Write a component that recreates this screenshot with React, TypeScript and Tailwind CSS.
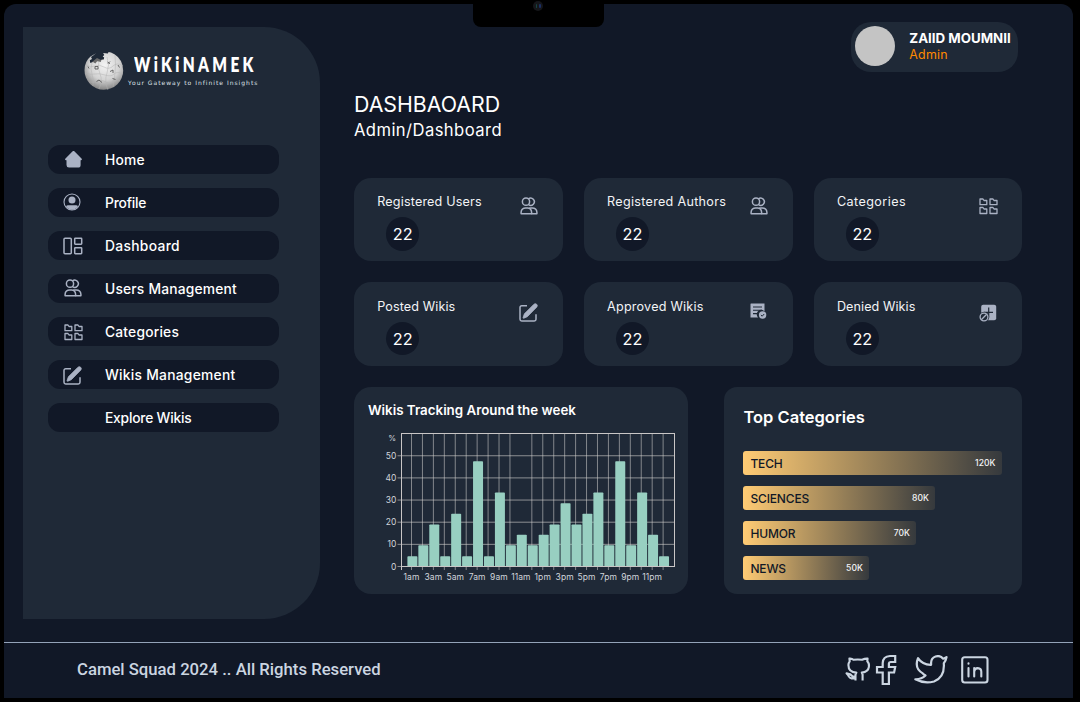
import type { ReactNode } from "react";

type IconProps = { className?: string };

const muted = "#aab2c4";

function HomeIcon({ className }: IconProps) {
  return (
    <svg width="17" height="17" viewBox="0 0 17 17" className={className} fill={muted}>
      <path d="M7.4 .5a1.5 1.5 0 0 1 2.2 0l6.9 6.9c.8.9.4 1.8-.6 1.9h-.3V14a2.6 2.6 0 0 1-2.6 2.6H4A2.6 2.6 0 0 1 1.5 14V9.300h-.4C0 9.200-.300 8.300.500 7.400z" />
    </svg>
  );
}

function ProfileIcon({ className }: IconProps) {
  return (
    <svg width="18" height="18" viewBox="0 0 18 18" className={className}>
      <circle cx="9" cy="9" r="8" fill="none" stroke={muted} strokeWidth="1.100" />
      <circle cx="9" cy="7" r="3.500" fill={muted} />
      <path d="M3 13.300Q3.600 12.200 5 12.200H13Q14.400 12.200 15 13.300Q12.800 16.700 9 16.700T3 13.300z" fill={muted} />
    </svg>
  );
}

function LayoutIcon({ className }: IconProps) {
  return (
    <svg width="20" height="18" viewBox="0 0 20 18" className={className} fill="none" stroke={muted} strokeWidth="1.500">
      <rect x="1" y="1.200" width="7.300" height="15.500" rx="1" />
      <rect x="11.700" y="1.200" width="7" height="6" rx=".6" />
      <rect x="11.700" y="10.700" width="7" height="6" rx=".6" />
    </svg>
  );
}

function UsersIcon({ className }: IconProps) {
  return (
    <svg width="18" height="18" viewBox="0 0 18 18" className={className} fill="none" stroke={muted} strokeWidth="1.500">
      <circle cx="6" cy="4.700" r="3.600" />
      <path d="M8.400 1.900A3.600 3.600 0 1 1 8.400 7.500" />
      <path d="M1.100 16.700v-1.500a4.500 4.500 0 0 1 4.500-4.300h2a4.500 4.500 0 0 1 4 4.300V16.700z" strokeLinejoin="round" />
      <path d="M9 11.300a4.500 4.500 0 0 1 2-.4h1.400a4.500 4.500 0 0 1 4.500 4.300V16.700h-5.500" strokeLinejoin="round" />
    </svg>
  );
}

function FoldersIcon({ className }: IconProps) {
  return (
    <svg width="19" height="17" viewBox="0 0 19 17" className={className} fill="none" stroke={muted} strokeWidth="1.300" strokeLinejoin="round">
      <path d="M1 1h3l1 1.500h2.800v4.200H1z" />
      <path d="M11 1h3l1 1.500h3v4.200h-7z" />
      <path d="M1 9.500h3l1 1.500h2.800v4.500H1z" />
      <path d="M11 9.500h3l1 1.500h3v4.500h-7z" />
    </svg>
  );
}

function EditIcon({ className }: IconProps) {
  return (
    <svg width="19" height="19" viewBox="0 0 19 19" className={className} fill="none" stroke={muted}>
      <path d="M8 2.800H2.700A1.700 1.700 0 0 0 1 4.500v11.800A1.700 1.700 0 0 0 2.700 18h12.600a1.700 1.700 0 0 0 1.700-1.700v-5" strokeWidth="1.500" />
      <path d="M15 1.200q1.300-1.100 2.600 0t.3 2.700L8.300 13.700l-3.500 1.500q-.9.200-.7-.7l1.300-3.700z" fill={muted} strokeWidth=".8" />
    </svg>
  );
}

function ApprovedIcon({ className }: IconProps) {
  return (
    <svg width="17" height="17" viewBox="0 0 17 17" className={className}>
      <path d="M1 .5h13.500V8.200A4.500 4.500 0 0 0 8 14.500H.500V1Q.500.500 1 .500z" fill={muted} />
      <path d="M3 4h9M3 7.300h9M3 10.600h4" stroke="#1f2937" strokeWidth="1.100" />
      <circle cx="12.600" cy="12" r="3.700" fill={muted} />
      <path d="M10.900 12l1.300 1.200 2-2.200" stroke="#1f2937" fill="none" />
    </svg>
  );
}

function DeniedIcon({ className }: IconProps) {
  return (
    <svg width="18" height="18" viewBox="0 0 18 18" className={className}>
      <rect x="2.200" y=".7" width="15" height="15.500" rx="2" fill={muted} />
      <path d="M9.700 3.500v10M5 8.400h9" stroke="#1f2937" strokeWidth="1.200" />
      <circle cx="5" cy="13" r="5.200" fill="#1f2937" />
      <circle cx="5" cy="13" r="3.900" fill="none" stroke={muted} strokeWidth="1.300" />
      <path d="M2.300 15.700l5.400-5.400" stroke={muted} strokeWidth="1.300" />
    </svg>
  );
}

function Globe() {
  return (
    <svg width="40" height="40" viewBox="0 0 40 40" className="shrink-0">
      <defs>
        <radialGradient id="globe" cx=".52" cy=".35" r=".65">
          <stop offset="0" stopColor="#f4f4f4" />
          <stop offset=".6" stopColor="#d2d2d2" />
          <stop offset="1" stopColor="#858585" />
        </radialGradient>
      </defs>
      <path d="M8 11L13 7l4 2 5-2 2 3-5 3-6 2z" fill="#6b6b6b" />
      <path
        d="M12 2.200L6.500 5.500Q.5 10.500.5 19.200A19.300 19.300 0 0 0 39.200 19.500Q39 8.500 30.500 3.200L27 1.600l-2.400-.6-.8 1.600-4.700-.6 1.200 2-1.600 1.400 1.500 1.200-.5 2.200-2.200 0-.8 2.300-3.600-.8-1.700 2.200-2.400-1.600-2.700 1-.5-2.700 2.200-1.200-1-2 2.200-1.500z"
        fill="url(#globe)"
      />
      <g fill="none" stroke="#b3b3b3" strokeWidth=".5">
        <path d="M2 14q5 3 9 1t9 1 9-1 10 0M1 22q6 2 10 1t10 1 9-1 9 0M5 31q5 1 8-1t9 1 7-1 7 0" />
        <path d="M8 12q-2 6 0 11t1 12M15 10q-2 7 1 13t-1 15M23 6q3 8 0 16t1 17M31 4q1 9 0 18t-2 14" />
      </g>
      <g fill="none" stroke="#5b5b5b" strokeWidth=".9">
        <path d="M11 15.500h3v2.500h-3zM23.500 11l2.500 1.700M26 10.500l-2 2M12.500 30.500l2.500-1.500 3 2.500M26 20.500l3-1.500v3M4 15.500l1 2M34 14l1.500 2.500M28.500 27.500l3 1" />
      </g>
    </svg>
  );
}

const nav: { label: string; icon: ReactNode; tracking: string }[] = [
  { label: "Home", icon: <HomeIcon />, tracking: "tracking-[0.250px]" },
  { label: "Profile", icon: <ProfileIcon className="relative -left-[1.500px]" />, tracking: "tracking-[-0.200px]" },
  { label: "Dashboard", icon: <LayoutIcon className="relative -left-[0.500px] top-px" />, tracking: "tracking-[0.330px]" },
  { label: "Users Management", icon: <UsersIcon />, tracking: "tracking-[0.200px]" },
  { label: "Categories", icon: <FoldersIcon className="relative top-[1.500px]" />, tracking: "tracking-[0.200px]" },
  { label: "Wikis Management", icon: <EditIcon className="relative -left-px top-px" />, tracking: "tracking-[0.270px]" },
  { label: "Explore Wikis", icon: null, tracking: "tracking-[-0.200px]" },
];

function Sidebar() {
  return (
    <aside className="mt-[22.700px] ml-[18.600px] h-[592.500px] w-[297px] shrink-0 rounded-r-[56px] bg-[#1f2937]">
      <div className="mt-[24px] ml-[61px] flex h-10 gap-[4.500px]">
        <Globe />
        <div className="flex flex-col whitespace-nowrap">
          <span className="ml-[6px] mt-[1px] h-[24px] w-[121px] origin-left scale-x-75 font-['Lato',sans-serif] text-[20.500px] leading-[24px] font-extrabold tracking-[4.500px] text-white">
            WiKiNAMEK
          </span>
          <span className="mt-[3px] font-['DejaVu_Sans',sans-serif] text-[6px] leading-[8px] tracking-[1px] text-[#dfe3e8]">
            Your Gateway to Infinite Insights
          </span>
        </div>
      </div>
      <nav className="mt-[54.300px] ml-[25px] flex w-[231.500px] flex-col gap-[14.300px]">
        {nav.map((n) => (
          <a key={n.label} className="flex h-[28.700px] items-center rounded-[12px] bg-[#111827]">
            <span className="flex w-[51px] justify-center">{n.icon}</span>
            <span className={`mt-[1.300px] ml-[6.400px] text-[13.800px] leading-[20px] font-medium text-white ${n.tracking}`}>{n.label}</span>
          </a>
        ))}
      </nav>
    </aside>
  );
}

const stats: { label: string; icon: ReactNode; tracking: string; iconBox: string }[] = [
  { label: "Registered Users", icon: <UsersIcon />, tracking: "tracking-[0.160px]", iconBox: "pt-[19px]" },
  { label: "Registered Authors", icon: <UsersIcon />, tracking: "tracking-[0.290px]", iconBox: "pt-[19px]" },
  { label: "Categories", icon: <FoldersIcon />, tracking: "tracking-[0.420px]", iconBox: "pt-[20px]" },
  { label: "Posted Wikis", icon: <EditIcon />, tracking: "tracking-[0.100px]", iconBox: "pt-[20.500px]" },
  { label: "Approved Wikis", icon: <ApprovedIcon />, tracking: "tracking-[0.210px]", iconBox: "pt-[21px]" },
  { label: "Denied Wikis", icon: <DeniedIcon />, tracking: "tracking-[0.070px]", iconBox: "pt-[22px]" },
];

function StatCards() {
  return (
    <section className="mt-[37px] grid w-[668.500px] grid-cols-3 gap-x-[21px] gap-y-[21.200px]">
      {stats.map((s) => (
        <div key={s.label} className="flex h-[83.300px] justify-between rounded-[17px] bg-[#1f2937] pl-[23.300px]">
          <div className="flex flex-col">
            <span className={`mt-[15.300px] text-[12.600px] leading-[18px] whitespace-nowrap text-[#f3f4f6] ${s.tracking}`}>{s.label}</span>
            <span className="mt-[6px] ml-[8.700px] flex size-[33.500px] items-center justify-center rounded-full bg-[#111827] pt-px text-[16.300px] text-white">
              22
            </span>
          </div>
          <div className={`flex w-[68px] justify-center ${s.iconBox}`}>{s.icon}</div>
        </div>
      ))}
    </section>
  );
}

const bars = [
  10.300, 21.300, 42, 10.300, 52.700, 10.300, 105.300, 10.300, 74, 21.300, 31.700, 21.300,
  31.700, 42, 63.300, 42, 52.700, 74, 21.300, 105.300, 21.300, 74, 31.700, 10.300,
];
const pitch = 10.940;
const plot = { left: 17.500, right: 290.500, top: 3.500, bottom: 136.500 };

function WeekChart() {
  return (
    <div className="h-[207px] w-[334px] rounded-[17px] bg-[#1f2937] pl-[14px]">
      <h2 className="mt-[13px] text-[13.350px] leading-[20px] font-semibold text-white">Wikis Tracking Around the week</h2>
      <svg
        width="310"
        height="156"
        viewBox="-16 0 310 156"
        className="mt-[10px] overflow-visible font-['Inter',sans-serif] text-[8.500px]"
      >
        {bars.map((_, i) =>
          i === 10 ? null : (
            <line key={i} x1={27.500 + i * pitch} x2={27.500 + i * pitch} y1={plot.top} y2={plot.bottom + 3.500} stroke="#d6d3d1" strokeOpacity=".55" />
          )
        )}
        {[0, 1, 2, 3, 4, 5].map((v) => {
          const y = plot.bottom - v * 22.150;
          return (
            <g key={v}>
              <line x1={plot.left - 4} x2={plot.right} y1={y} y2={y} stroke="#d6d3d1" strokeOpacity=".6" />
              <text x="12.300" y={y + 3} textAnchor="end" fill="#d1d5db">{v * 10}</text>
            </g>
          );
        })}
        <text x="12" y="11" textAnchor="end" fill="#d1d5db" className="text-[8px]">%</text>
        {bars.map((h, i) => (
          <rect key={i} x={23.400 + i * pitch} y={plot.bottom - h} width="10" height={h} rx=".8" fill="#98cfc1" />
        ))}
        <rect
          x={plot.left}
          y={plot.top}
          width={plot.right - plot.left}
          height={plot.bottom - plot.top}
          fill="none"
          stroke="#c9c6c6"
        />
        <path d={`M${plot.left} ${plot.bottom}v3.500`} stroke="#c9c6c6" />
        {["1am", "3am", "5am", "7am", "9am", "11am", "1pm", "3pm", "5pm", "7pm", "9pm", "11pm"].map((t, i) => (
          <text key={t} x={27.500 + i * 2 * pitch} y="149.500" textAnchor="middle" fill="#d1d5db" letterSpacing=".1">
            {t}
          </text>
        ))}
      </svg>
    </div>
  );
}

const categories = [
  { name: "TECH", value: "120K", width: "w-[258.500px]" },
  { name: "SCIENCES", value: "80K", width: "w-[192px]" },
  { name: "HUMOR", value: "70K", width: "w-[173px]" },
  { name: "NEWS", value: "50K", width: "w-[126px]" },
];

function TopCategories() {
  return (
    <div className="mr-[0.600px] h-[207px] w-[298px] rounded-[13px] bg-[#1f2937] pl-[19.500px]">
      <h2 className="mt-[18px] text-[16.500px] leading-[24px] font-semibold text-white">Top Categories</h2>
      <div className="mt-[22px] flex flex-col gap-[11px]">
        {categories.map((c) => (
          <div
            key={c.name}
            className={`flex h-[24px] items-center justify-between rounded-[3px] bg-linear-to-r from-[#ffcb74] to-[#ffcb74]/10 pr-[6.500px] pl-[7px] ${c.width}`}
          >
            <span className="pt-px text-[12px] font-medium tracking-[-0.150px] text-[#111827]">{c.name}</span>
            <span className="pt-px text-[8.600px] font-medium text-[#f3f4f6]">{c.value}</span>
          </div>
        ))}
      </div>
    </div>
  );
}

function Footer() {
  return (
    <footer className="flex h-[56px] items-center border-t border-[#94a3b8] pb-[2px] pl-[73px] text-[#cbd5e1]">
      <span className="w-[768px] pt-px font-['Roboto',sans-serif] text-[16.700px] font-medium whitespace-nowrap">
        Camel Squad 2024 .. All Rights Reserved
      </span>
      <svg width="26" height="26" viewBox="0 0 26 26" fill="none" stroke="currentColor" strokeWidth="2.100" strokeLinejoin="round">
        <path d="M10.500 23.500v-6l.9-1.900q-8-.5-8-7.600 0-2 1.300-3.700l-.3-2.700q2.600-.2 4.100 1.200 4.200-.7 8.500 0Q20 1.400 22.600 1.600l-.3 2.700q2.200 2.300 1.600 5.500-.6 4.900-7.100 5.800l.8 1.900v6" />
        <path d="M10.500 19.500H7.700L5 17.200 1.600 16.300q1.500 1.100 2.400 3.300.7 1.500 2.500 1.700h4" strokeWidth="2.200" />
      </svg>
      <svg width="22" height="32" viewBox="0 0 22 32" className="ml-[4px]" fill="none" stroke="currentColor" strokeWidth="2.200" strokeLinejoin="miter">
        <path d="M20.200 2H15Q8 2.300 7.700 9v4H2v5.500h5.700v11.500h6.200V18.500h5.200l1.100-5.500h-6.300V9.500q0-1.300 1.700-1.500h4.600z" />
      </svg>
      <svg width="34" height="30" viewBox="0 0 34 30" className="ml-[16.500px]" fill="none" stroke="currentColor" strokeWidth="2.200" strokeLinejoin="round">
        <path d="M32.500 2.200q-1.500 1-3.300 1.500a6.800 6.800 0 0 0-12.100 4.500v1.600Q8.500 10 4 3.200q-4 10 4.800 15.200Q9 19 11.500 20.500 7.500 24.500 1.300 24.300 10 29 20 26.500 30 22.500 29.900 10.500l-.1-2.300q2-2.200 2.700-6z" />
      </svg>
      <svg width="28" height="28" viewBox="0 0 28 28" className="ml-[13.500px]" fill="none" stroke="currentColor" strokeWidth="2.100" strokeLinecap="round">
        <rect x="1.200" y="1.200" width="25.300" height="25.300" rx="2.500" />
        <path d="M7.500 12v8.500M7.500 7.400v.4M13.200 20.500V12M13.200 15.500q.4-3.300 3.500-3.400 3.600.2 3.600 3.700v4.700" />
      </svg>
    </footer>
  );
}

export default function App() {
  return (
    <div className="h-[702px] w-[1080px] overflow-hidden bg-black pt-1 pl-1 font-['Inter',sans-serif]">
      <div className="relative h-[694px] w-[1069px] rounded-t-[12px] bg-[#111827]">
        <div className="absolute -top-1 left-[469px] h-[27px] w-[131px] rounded-b-[8px] bg-black">
          <div className="absolute top-px left-[60px] flex size-[10px] items-center justify-center gap-[2px] rounded-full bg-[#15161a]">
            <span className="h-[4px] w-[1.500px] rounded-full bg-[#17443f]" />
            <span className="h-[4px] w-[1.500px] rounded-full bg-[#1b2f66]" />
          </div>
        </div>
        <div className="flex h-[638px]">
          <Sidebar />
          <main className="ml-[34.400px] flex w-[668.500px] flex-col">
            <div className="mt-[17.500px] mr-[4.200px] flex h-[50px] w-[167px] items-center self-end rounded-[20px] bg-[#1f2937] pb-[1.500px] pl-[4px]">
              <div className="size-[40px] shrink-0 rounded-full bg-[#c4c4c4]" />
              <div className="ml-[14px] flex flex-col whitespace-nowrap">
                <span className="text-[13.300px] leading-[18px] font-bold text-white">ZAIID MOUMNII</span>
                <span className="text-[12.400px] leading-[15px] tracking-[0.240px] text-[#ff8a00]">Admin</span>
              </div>
            </div>
            <h1 className="mt-[18.200px] text-[21.300px] leading-[28px] text-white">DASHBAOARD</h1>
            <p className="mt-[1.200px] text-[16.600px] leading-[22px] tracking-[0.430px] text-white">Admin/Dashboard</p>
            <StatCards />
            <section className="mt-[21.500px] flex justify-between">
              <WeekChart />
              <TopCategories />
            </section>
          </main>
        </div>
        <Footer />
      </div>
    </div>
  );
}
